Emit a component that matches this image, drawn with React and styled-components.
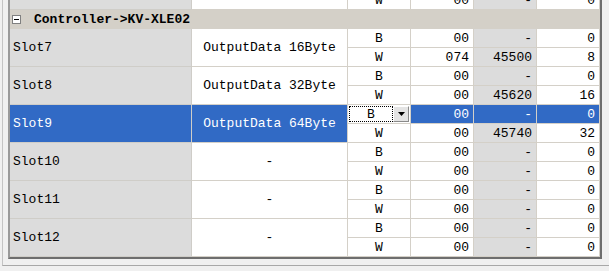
import React from 'react'
import styled, { createGlobalStyle } from 'styled-components'

const GlobalStyle = createGlobalStyle`
  html, body {
    margin: 0;
    padding: 0;
    background: #f0f0f0;
  }
`

// rows above the group header, scrolled mostly out of view
const before = [
  { name: '', data: '', rows: [['B', '00', '-', '0'], ['W', '00', '-', '0']] },
]

const slots = [
  { name: 'Slot7', data: 'OutputData 16Byte', rows: [['B', '00', '-', '0'], ['W', '074', '45500', '8']] },
  { name: 'Slot8', data: 'OutputData 32Byte', rows: [['B', '00', '-', '0'], ['W', '00', '45620', '16']] },
  { name: 'Slot9', data: 'OutputData 64Byte', selected: true, rows: [['B', '00', '-', '0'], ['W', '00', '45740', '32']] },
  { name: 'Slot10', data: '-', rows: [['B', '00', '-', '0'], ['W', '00', '-', '0']] },
  { name: 'Slot11', data: '-', rows: [['B', '00', '-', '0'], ['W', '00', '-', '0']] },
  { name: 'Slot12', data: '-', rows: [['B', '00', '-', '0'], ['W', '00', '-', '0']] },
]

function SlotGroup({ slot }) {
  return (
    <Group>
      <SlotCell selected={slot.selected}>{slot.name}</SlotCell>
      <NameCell selected={slot.selected}>{slot.data}</NameCell>
      <SubRows>
        {slot.rows.map((r, i) => {
          const active = slot.selected && i === 0
          return (
            <SubRow key={i}>
              {active ? (
                <TypeCell>
                  <Combo>
                    <ComboText>{r[0]}</ComboText>
                    <ComboButton>
                      <svg width="7" height="4" viewBox="0 0 7 4">
                        <path d="M0 0h7L3.5 4z" fill="#000" />
                      </svg>
                    </ComboButton>
                  </Combo>
                </TypeCell>
              ) : (
                <TypeCell>{r[0]}</TypeCell>
              )}
              <ValueCell selected={active}>{r[1]}</ValueCell>
              <ValueCell selected={active} shaded>{r[2]}</ValueCell>
              <ValueCell selected={active}>{r[3]}</ValueCell>
            </SubRow>
          )
        })}
      </SubRows>
    </Group>
  )
}

export default function App() {
  return (
    <Page>
      <GlobalStyle />
      <Panel>
        <Frame>
          <Scroller>
            {before.map((s, i) => <SlotGroup key={i} slot={s} />)}
            <HeaderRow>
              <Toggle>
                <svg width="9" height="9" viewBox="0 0 9 9">
                  <rect x="0.5" y="0.5" width="8" height="8" fill="#fff" stroke="#808080" />
                  <path d="M2 4.5h5" stroke="#000" />
                </svg>
              </Toggle>
              <HeaderText>Controller-&gt;KV-XLE02</HeaderText>
            </HeaderRow>
            {slots.map(s => <SlotGroup key={s.name} slot={s} />)}
          </Scroller>
        </Frame>
      </Panel>
    </Page>
  )
}

const Page = styled.div`
  width: 609px;
  height: 271px;
  overflow: hidden;
  background: #f0f0f0;
  font-family: "Liberation Mono", "Courier New", monospace;
  font-size: 13px;
  color: #000;
`

const Panel = styled.div`
  margin-left: 2px;
  width: 607px;
  height: 266px;
  box-sizing: border-box;
  border-left: 1px solid #c4c4c4;
  border-bottom: 1px solid #a8a8a8;
  padding-left: 5px;
`

const Frame = styled.div`
  width: 594px;
  height: 259px;
  box-sizing: border-box;
  border-left: 2px solid #9a9a9a;
  border-right: 2px solid #6e6e6e;
  border-bottom: 2px solid #6e6e6e;
  background: #fff;
  overflow: hidden;
`

const Scroller = styled.div`
  margin-top: -28px;
  display: flex;
  flex-direction: column;
`

const Group = styled.div`
  display: flex;
  height: 38px;
`

const SlotCell = styled.div`
  width: 182px;
  flex: none;
  box-sizing: border-box;
  border-right: 1px solid #cfcdc8;
  border-bottom: 1px solid #cfcdc8;
  background: ${p => (p.selected ? '#316ac5' : '#dcdcdc')};
  color: ${p => (p.selected ? '#fff' : '#000')};
  display: flex;
  align-items: center;
  padding-left: 3px;
`

const NameCell = styled.div`
  width: 156px;
  flex: none;
  box-sizing: border-box;
  border-right: 1px solid #d4d0c8;
  border-bottom: 1px solid #d4d0c8;
  background: ${p => (p.selected ? '#316ac5' : '#fff')};
  color: ${p => (p.selected ? '#fff' : '#000')};
  display: flex;
  align-items: center;
  justify-content: center;
`

const SubRows = styled.div`
  display: flex;
  flex-direction: column;
  flex: 1;
`

const SubRow = styled.div`
  display: grid;
  grid-template-columns: 63px 63px 63px 63px;
  height: 19px;
`

const TypeCell = styled.div`
  box-sizing: border-box;
  border-right: 1px solid #d4d0c8;
  border-bottom: 1px solid #d4d0c8;
  background: #fff;
  display: flex;
  align-items: center;
  justify-content: center;
  position: relative;
`

const ValueCell = styled.div`
  box-sizing: border-box;
  border-right: 1px solid #d4d0c8;
  border-bottom: 1px solid #d4d0c8;
  background: ${p => (p.selected ? '#316ac5' : p.shaded ? '#dcdcdc' : '#fff')};
  color: ${p => (p.selected ? '#fff' : '#000')};
  display: flex;
  align-items: center;
  justify-content: flex-end;
  padding-right: 4px;
`

const Combo = styled.div`
  position: absolute;
  inset: 0 0 0 0;
  display: flex;
  background: #fff;
`

const ComboText = styled.div`
  flex: 1;
  margin: 1px 0 1px 1px;
  border: 1px dotted #000;
  display: flex;
  align-items: center;
  justify-content: center;
`

const ComboButton = styled.div`
  width: 16px;
  flex: none;
  margin: 1px 1px 1px 0;
  box-sizing: border-box;
  background: #e4e4e4;
  border: 1px solid;
  border-color: #fff #8a8a8a #8a8a8a #fff;
  display: flex;
  align-items: center;
  justify-content: center;
`

const HeaderRow = styled.div`
  height: 19px;
  box-sizing: border-box;
  background: #d4d0c8;
  display: flex;
  align-items: center;
  padding-left: 2px;
  border-bottom: 1px solid #d4d0c8;
`

const Toggle = styled.div`
  width: 9px;
  height: 9px;
  display: flex;
  margin-right: 13px;
`

const HeaderText = styled.span`
  font-weight: bold;
`
